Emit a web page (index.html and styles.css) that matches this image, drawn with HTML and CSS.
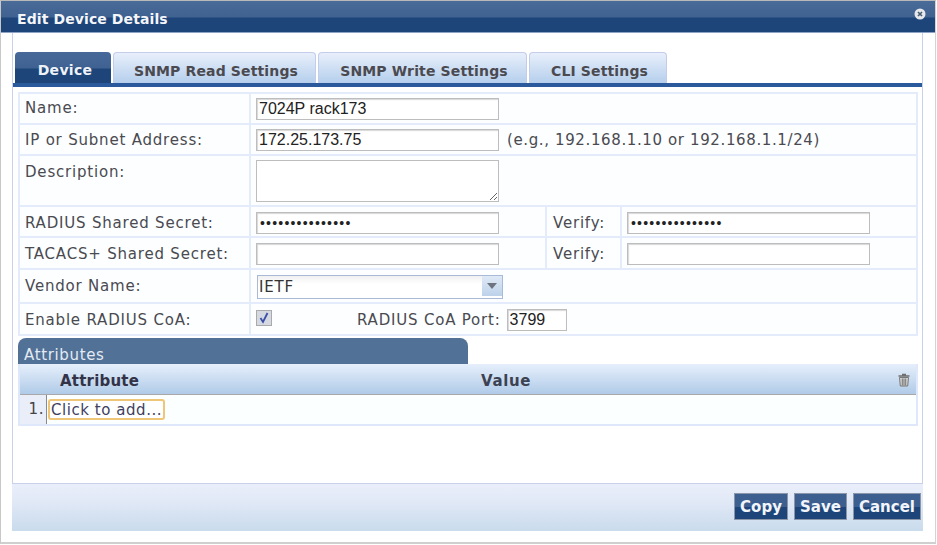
FILE: index.html
```html
<!DOCTYPE html>
<html lang="en">
<head>
<meta charset="utf-8">
<title>Edit Device Details</title>
<link rel="stylesheet" href="styles.css">
</head>
<body>
<div class="dialog">
  <header class="titlebar">
    <h1 class="title">Edit Device Details</h1>
    <svg class="close" width="12" height="12" viewBox="0 0 12 12"><circle cx="6" cy="6" r="5.5" fill="#e6e8ec"/><path d="M4 4l4 4M8 4l-4 4" stroke="#4a5a70" stroke-width="1.6"/></svg>
  </header>
  <div class="body">
    <nav class="tabs">
      <div class="tab active">Device</div>
      <div class="tab t2">SNMP Read Settings</div>
      <div class="tab t3">SNMP Write Settings</div>
      <div class="tab t4">CLI Settings</div>
    </nav>
    <div class="panel">
      <table class="form">
        <colgroup><col class="c1"><col class="c2"><col class="c3"><col></colgroup>
        <tr class="r-name"><td class="lab">Name:</td><td colspan="3"><input class="txt" value="7024P rack173"></td></tr>
        <tr class="r-ip"><td class="lab">IP or Subnet Address:</td><td colspan="3"><input class="txt" value="172.25.173.75"><span class="hint">(e.g., 192.168.1.10 or 192.168.1.1/24)</span></td></tr>
        <tr class="r51"><td class="lab">Description:</td><td colspan="3"><textarea class="area"></textarea></td></tr>
        <tr><td class="lab">RADIUS Shared Secret:</td><td><input class="txt pw" type="password" value="aaaaaaaaaaaaaaa"></td><td class="lab verify">Verify:</td><td><input class="txt pw" type="password" value="aaaaaaaaaaaaaaa"></td></tr>
        <tr class="r32"><td class="lab">TACACS+ Shared Secret:</td><td><input class="txt pw" type="password"></td><td class="lab verify">Verify:</td><td><input class="txt pw" type="password"></td></tr>
        <tr class="r34"><td class="lab">Vendor Name:</td><td colspan="3">
          <div class="select"><span class="sel-text">IETF</span><span class="sel-btn"><svg width="10" height="6" viewBox="0 0 10 6"><path d="M0 0h10L5 6z" fill="#6d7480"/></svg></span></div>
        </td></tr>
        <tr class="r32"><td class="lab">Enable RADIUS CoA:</td><td colspan="3">
          <div class="coa">
            <span class="check"><svg width="14" height="14" viewBox="0 0 14 14"><path d="M3.500 7l2.500 4 4.500-9" fill="none" stroke="#3c4fa8" stroke-width="1.800"/></svg></span>
            <label class="port-label">RADIUS CoA Port:</label>
            <input class="txt port" value="3799">
          </div>
        </td></tr>
      </table>
      <div class="attr-tab">Attributes</div>
      <div class="grid">
        <div class="grid-head">
          <span class="h-attr">Attribute</span>
          <span class="h-val">Value</span>
          <svg class="trash" width="12" height="14" viewBox="0 0 12 14"><path d="M4 1.500h4M0.500 3h11" stroke="#6f6f6f" stroke-width="1.500" fill="none"/><path d="M1.500 4.500h9l-.8 8.500H2.300z" fill="#d4d4d4" stroke="#777"/><path d="M4.300 5.500v7M6 5.500v7M7.700 5.500v7" stroke="#777"/></svg>
        </div>
        <div class="grid-row">
          <span class="num">1.</span>
          <span class="add">Click to add...</span>
        </div>
      </div>
    </div>
  </div>
  <footer class="foot">
    <button class="btn">Copy</button>
    <button class="btn">Save</button>
    <button class="btn">Cancel</button>
  </footer>
</div>
</body>
</html>
```
FILE: styles.css
```css
* { box-sizing: border-box; }
html, body { margin: 0; padding: 0; background: #fff; }
body { width: 937px; height: 545px; overflow: hidden; font-family: "DejaVu Sans", Verdana, sans-serif; }
.dialog { width: 936px; height: 544px; border-right: 1px solid #d4d4d4; border-bottom: 2px solid #cfcfcf; border-top: 1px solid #b9b9b9; border-left: 1px solid #c8c8c8; display: flex; flex-direction: column; }
.titlebar { height: 32px; flex: none; display: flex; align-items: center; justify-content: space-between; padding: 0 9px 0 16px; background: linear-gradient(#4a6b97 0, #3f6292 16px, #1d4579 17px, #1d4579 100%); border-bottom: 1px solid #8fa3c4; }
.title { margin: 5px 0 0; font: bold 14px/20px "DejaVu Sans", sans-serif; color: #f4f6fa; letter-spacing: 0.1px; }
.close { margin-bottom: 5px; }
.body { flex: 1; margin: 0 12px 0 11px; padding-top: 19px; border-left: 1px solid #c8d0ea; border-right: 1px solid #c8d0ea; border-bottom: 1px solid #c8d0ea; display: flex; flex-direction: column; min-height: 0; }
.tabs { display: flex; gap: 2px; height: 31px; margin-left: 2px; }
.tab { height: 31px; padding-left: 3px; border: 1px solid #c3cdea; border-bottom: 0; border-radius: 4px 4px 0 0; background: linear-gradient(#e8effb, #b5cfec); color: #4b4a50; font: bold 14px/36px "DejaVu Sans", sans-serif; letter-spacing: 0.14px; text-align: center; }
.tab.active { width: 96px; padding-left: 4px; border: 0; background: linear-gradient(#46699a 0, #3f6292 16px, #1d4579 17px, #1d4579 100%); color: #eef2f8; letter-spacing: 0.3px; }
.t2 { width: 203px; }
.t3 { width: 209px; }
.t4 { width: 138px; }
.panel { border-top: 4px solid #2a5a9c; padding: 5px 5px 0 5px; flex: 1; min-height: 0; }
.form { width: 900px; border-collapse: collapse; table-layout: fixed; color: #4a4a50; font-size: 15px; letter-spacing: 0.8px; border: 1px solid #dfe8fb; background: #fcfeff; }
.c1 { width: 231px; }
.c2 { width: 296px; }
.c3 { width: 75px; }
.form td { border: 2px solid #e4ecfb; padding: 0 0 0 5px; vertical-align: middle; height: 31px; }
.form .lab { vertical-align: top; padding-top: 7px; line-height: 18px; }
.form .lab.verify { padding-left: 6px; }
.form .r-name .lab { padding-top: 5px; }
.form .r-ip .lab { padding-top: 6px; }
.r51 td { height: 51px; }
.r34 td { height: 34px; }
.r32 td { height: 32px; }
.txt { width: 243px; height: 22px; border: 1px solid #bdbdbd; border-radius: 0; box-shadow: inset 1px 1px 1px #d8d8d8; padding: 0 2px; font: 16px "Liberation Sans", Arial, sans-serif; letter-spacing: 0; color: #222; background: #fff; vertical-align: middle; display: inline-block; }
.pw { letter-spacing: 1.2px; font-size: 14px; margin-top: 2px; padding-left: 3px; }
.hint { margin-left: 8px; vertical-align: middle; letter-spacing: 0.62px; }
.area { width: 243px; height: 42px; border: 1px solid #bdbdbd; padding: 2px; display: block; background: #fff; resize: both; }
.select { width: 246px; height: 24px; border: 1px solid #a9b9d8; background: linear-gradient(#f0f0f0, #fff 8px); display: flex; align-items: center; justify-content: space-between; font-size: 15px; color: #333; margin: 1px 0 0 1px; }
.sel-text { padding-left: 1px; line-height: 22px; }
.sel-btn { width: 20px; height: 20px; align-self: flex-start; display: flex; align-items: center; justify-content: center; background: linear-gradient(#dfe9f6, #bcd2ea); }
.coa { display: flex; align-items: center; height: 28px; margin-top: 2px; }
.check { width: 16px; height: 16px; border: 1px solid #aaa; background: #d5d9e2; display: flex; align-items: center; justify-content: center; margin-top: -5px; }
.port-label { margin-left: 85px; }
.port { width: 60px; margin-left: 6px; }
.attr-tab { width: 450px; height: 26px; margin-top: 2px; border-radius: 8px 8px 0 0; background: #517196; color: #e4ebf4; font-size: 15px; letter-spacing: 0.65px; line-height: 35px; padding-left: 6px; overflow: hidden; }
.grid { width: 900px; border-style: solid; border-width: 0 2px 2px; border-color: #dfe8fb; }
.grid-head { height: 31px; padding-top: 3px; display: flex; align-items: center; background: linear-gradient(#e6effb, #b0cbe8); border-bottom: 1px solid #a8a8a8; font: bold 15px "DejaVu Sans", sans-serif; letter-spacing: 0.2px; color: #333348; }
.h-attr { margin-left: 40px; }
.h-val { margin-left: 342px; color: #3d4252; letter-spacing: 0.6px; }
.trash { margin-left: auto; margin-right: 6px; margin-top: -1px; }
.grid-row { height: 29px; display: flex; align-items: center; background: #fbffff; font-size: 15px; letter-spacing: 0.55px; color: #444; }
.num { width: 27px; height: 100%; text-align: right; padding: 5px 2px 0 0; background: #e9eef8; border-right: 1px solid #8a8a8a; }
.add { margin-left: 1px; height: 21px; line-height: 17px; padding: 1px 1px 0; border: 2px solid #efc678; border-radius: 3px; color: #3f3f5f; background: #fff; white-space: nowrap; }
.foot { height: 47px; flex: none; margin: 0 12px 11px 11px; background: linear-gradient(#e9eefa 0, #e3eaf7 15px, #c9dbec 100%); display: flex; justify-content: flex-end; align-items: flex-start; gap: 6px; padding: 9px 2px 0 0; }
.btn { height: 27px; padding: 0; border: 1px solid #8b97a8; background: linear-gradient(#3d5f90 0, #3d5f90 50%, #1d4579 51%, #1d4579 100%); color: #f2f6fb; font: bold 15px/24px "DejaVu Sans", sans-serif; }
.btn:nth-child(1) { width: 54px; }
.btn:nth-child(2) { width: 53px; }
.btn:nth-child(3) { width: 68px; }
```
